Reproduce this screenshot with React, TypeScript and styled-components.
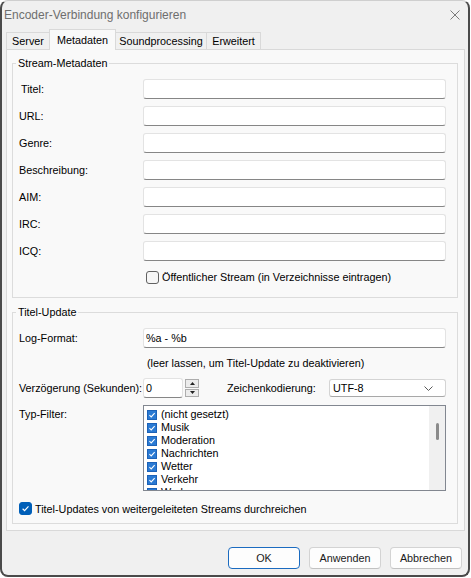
import React from "react";
import styled, { createGlobalStyle } from "styled-components";

const GlobalStyle = createGlobalStyle`
  html, body { margin: 0; padding: 0; background: #ffffff; }
  body { font-family: "Liberation Sans", Arial, sans-serif; }
  * { box-sizing: border-box; }
`;

const FONT = `"Liberation Sans", Arial, sans-serif`;

const Window = styled.div`
  width: 470px;
  height: 577px;
  background: #f0f0f0;
  border: 2px solid #4a4a4a;
  border-top: 1px solid #cfcfcf;
  border-radius: 8px;
  display: flex;
  flex-direction: column;
  overflow: hidden;
  font-family: ${FONT};
  font-size: 10.8px;
  color: #000;
`;

const TitleBar = styled.div`
  height: 28px;
  flex: none;
  display: flex;
  align-items: center;
  justify-content: space-between;
  padding: 0 8px 1px 2px;
`;

const Title = styled.span`
  font-size: 12px;
  color: #6e6e6e;
  white-space: nowrap;
`;

const CloseIcon = styled.svg`
  width: 10px;
  height: 10px;
  display: block;
`;

const TabStrip = styled.div`
  height: 20px;
  flex: none;
  display: flex;
  align-items: flex-end;
  margin-left: 4px;
  position: relative;
  z-index: 1;
`;

const Tab = styled.div<{ $active?: boolean; $w: number; $first?: boolean }>`
  width: ${(p) => p.$w}px;
  height: ${(p) => (p.$active ? 21 : 17)}px;
  margin-bottom: ${(p) => (p.$active ? -1 : 0)}px;
  margin-left: ${(p) => (p.$first ? 0 : -1)}px;
  border: 1px solid #d9d9d9;
  border-bottom: none;
  background: ${(p) => (p.$active ? "#f9f9f9" : "#f0f0f0")};
  display: flex;
  align-items: center;
  justify-content: center;
  padding-bottom: ${(p) => (p.$active ? 1 : 0)}px;
  white-space: nowrap;
  position: relative;
  z-index: ${(p) => (p.$active ? 2 : 1)};
`;

const TabPanel = styled.div`
  flex: none;
  margin: 0 3px 0 4px;
  background: #f9f9f9;
  border: 1px solid #d9d9d9;
  padding: 6px 6px 6px 5px;
  display: flex;
  flex-direction: column;
  gap: 7px;
`;

const GroupBox = styled.fieldset<{ $pb: number }>`
  margin: 0;
  min-width: 0;
  border: 1px solid #dcdcdc;
  padding: 9px 11px ${(p) => p.$pb}px 6px;
  display: grid;
  grid-template-columns: 124px 1fr;
  row-gap: 7px;
  align-items: center;
`;

const Legend = styled.legend`
  padding: 0 2px;
  margin-left: -3px;
  line-height: 14px;
  font-size: 10.8px;
  white-space: nowrap;
`;

const Label = styled.label<{ $indent?: number; $top?: boolean }>`
  padding-left: ${(p) => p.$indent ?? 0}px;
  padding-top: 1px;
  white-space: nowrap;
  line-height: 13px;
  align-self: ${(p) => (p.$top ? "start" : "center")};
  margin-top: ${(p) => (p.$top ? 2 : 0)}px;
`;

const TextField = styled.input<{ $w?: number }>`
  height: 20px;
  width: ${(p) => (p.$w ? `${p.$w}px` : "100%")};
  margin: 0;
  background: #ffffff;
  border: 1px solid #e3e3e3;
  border-bottom-color: #868686;
  border-radius: 3px;
  padding: 0 2px;
  font-family: ${FONT};
  font-size: 10.8px;
  color: #000;
  outline: none;
`;

const Hint = styled.div`
  grid-column: 2;
  height: 16px;
  line-height: 16px;
  padding-left: 4px;
  white-space: nowrap;
`;

const CheckRow = styled.div<{ $span?: boolean; $mt: number; $h: number; $pl: number }>`
  grid-column: ${(p) => (p.$span ? "1 / span 2" : "2")};
  height: ${(p) => p.$h}px;
  margin-top: ${(p) => p.$mt}px;
  padding-left: ${(p) => p.$pl}px;
  display: flex;
  align-items: center;
  gap: 3px;
  white-space: nowrap;
`;

const CheckBox = styled.span<{ $checked?: boolean }>`
  width: 13px;
  height: 13px;
  flex: none;
  border-radius: 3px;
  border: 1px solid ${(p) => (p.$checked ? "#005fb8" : "#616161")};
  background: ${(p) => (p.$checked ? "#005fb8" : "#f6f6f6")};
  display: inline-flex;
  align-items: center;
  justify-content: center;
`;

const SpinRow = styled.div`
  height: 20px;
  display: flex;
  align-items: center;
`;

const SpinButtons = styled.div`
  margin-left: 2px;
  width: 14px;
  height: 18px;
  display: flex;
  flex-direction: column;
  gap: 1px;
`;

const SpinButton = styled.div`
  flex: 1;
  border: 1px solid #adadad;
  background: #ececec;
  display: flex;
  align-items: center;
  justify-content: center;
`;

const InlineLabel = styled.span`
  margin-left: 28px;
  white-space: nowrap;
`;

const Combo = styled.div`
  margin-left: auto;
  width: 117px;
  height: 18px;
  background: #ffffff;
  border: 1px solid #d4d4d4;
  border-bottom-color: #a8a8a8;
  border-radius: 3px;
  display: flex;
  align-items: center;
  justify-content: space-between;
  padding: 0 12px 0 3px;
`;

const ListBox = styled.div`
  height: 86px;
  border: 1px solid #828790;
  background: #ffffff;
  display: flex;
  overflow: hidden;
`;

const ListItems = styled.div`
  flex: 1;
  height: 84px;
  padding: 2px 0 0 3px;
  display: flex;
  flex-direction: column;
  overflow: hidden;
`;

const ListItem = styled.div`
  height: 13px;
  flex: none;
  display: flex;
  align-items: center;
  gap: 4px;
  white-space: nowrap;
  line-height: 13px;
`;

const ListCheck = styled.span`
  width: 10px;
  height: 10px;
  flex: none;
  background: #2a7ad3;
  border: 1px solid #1c62b8;
  display: inline-flex;
  align-items: center;
  justify-content: center;
`;

const ScrollTrack = styled.div`
  width: 16px;
  flex: none;
  background: #f0f0f0;
  display: flex;
  justify-content: center;
  padding-top: 17px;
`;

const ScrollThumb = styled.div`
  width: 3px;
  height: 17px;
  background: #8a8a8a;
  border-radius: 2px;
`;

const Footer = styled.div`
  flex: none;
  display: flex;
  justify-content: flex-end;
  gap: 9px;
  padding: 16px 6px 0 0;
`;

const Button = styled.button<{ $default?: boolean }>`
  width: 72px;
  height: 22px;
  margin: 0;
  padding: 0;
  border: 1px solid ${(p) => (p.$default ? "#1b6bc0" : "#d3d3d3")};
  border-bottom-color: ${(p) => (p.$default ? "#1b6bc0" : "#c2c2c2")};
  border-radius: 4px;
  background: #fdfdfd;
  font-family: ${FONT};
  font-size: 10.8px;
  color: #1a1a1a;
`;

const Check = ({ size = 9 }: { size?: number }) => (
  <svg width={size} height={size} viewBox="0 0 10 10">
    <polyline points="1.8,5.3 4,7.4 8.3,2.6" fill="none" stroke="#ffffff" strokeWidth="1.3" />
  </svg>
);

const metaFields = ["Titel:", "URL:", "Genre:", "Beschreibung:", "AIM:", "IRC:", "ICQ:"];
const filterItems = [
  "(nicht gesetzt)",
  "Musik",
  "Moderation",
  "Nachrichten",
  "Wetter",
  "Verkehr",
  "Werbung",
];

export default function App() {
  return (
    <>
      <GlobalStyle />
      <Window>
        <TitleBar>
          <Title>Encoder-Verbindung konfigurieren</Title>
          <CloseIcon viewBox="0 0 10 10">
            <path d="M0.5 0.5 L9.5 9.5 M9.5 0.5 L0.5 9.5" stroke="#7a7a7a" strokeWidth="1" fill="none" />
          </CloseIcon>
        </TitleBar>
        <TabStrip>
          <Tab $w={44} $first>Server</Tab>
          <Tab $w={67} $active>Metadaten</Tab>
          <Tab $w={92}>Soundprocessing</Tab>
          <Tab $w={55}>Erweitert</Tab>
        </TabStrip>
        <TabPanel>
          <GroupBox $pb={13}>
            <Legend>Stream-Metadaten</Legend>
            {metaFields.map((f, i) => (
              <React.Fragment key={f}>
                <Label $indent={i === 0 ? 2 : 0}>{f}</Label>
                <TextField defaultValue="" />
              </React.Fragment>
            ))}
            <CheckRow $mt={2} $h={14} $pl={3}>
              <CheckBox />
              <span>Öffentlicher Stream (in Verzeichnisse eintragen)</span>
            </CheckRow>
          </GroupBox>
          <GroupBox $pb={7}>
            <Legend>Titel-Update</Legend>
            <Label>Log-Format:</Label>
            <TextField defaultValue="%a - %b" />
            <Hint>(leer lassen, um Titel-Update zu deaktivieren)</Hint>
            <Label>Verzögerung (Sekunden):</Label>
            <SpinRow>
              <TextField $w={40} defaultValue="0" />
              <SpinButtons>
                <SpinButton>
                  <svg width="5" height="3" viewBox="0 0 5 3">
                    <polygon points="0,3 5,3 2.5,0" fill="#222" />
                  </svg>
                </SpinButton>
                <SpinButton>
                  <svg width="5" height="3" viewBox="0 0 5 3">
                    <polygon points="0,0 5,0 2.5,3" fill="#222" />
                  </svg>
                </SpinButton>
              </SpinButtons>
              <InlineLabel>Zeichenkodierung:</InlineLabel>
              <Combo>
                <span>UTF-8</span>
                <svg width="9" height="5" viewBox="0 0 9 5">
                  <polyline points="0.5,0.5 4.5,4.5 8.5,0.5" fill="none" stroke="#5a5a5a" strokeWidth="1" />
                </svg>
              </Combo>
            </SpinRow>
            <Label $top>Typ-Filter:</Label>
            <ListBox>
              <ListItems>
                {filterItems.map((it) => (
                  <ListItem key={it}>
                    <ListCheck>
                      <Check size={8} />
                    </ListCheck>
                    <span>{it}</span>
                  </ListItem>
                ))}
              </ListItems>
              <ScrollTrack>
                <ScrollThumb />
              </ScrollTrack>
            </ListBox>
            <CheckRow $span $mt={3} $h={15} $pl={0}>
              <CheckBox $checked>
                <Check />
              </CheckBox>
              <span>Titel-Updates von weitergeleiteten Streams durchreichen</span>
            </CheckRow>
          </GroupBox>
        </TabPanel>
        <Footer>
          <Button $default>OK</Button>
          <Button>Anwenden</Button>
          <Button>Abbrechen</Button>
        </Footer>
      </Window>
    </>
  );
}
